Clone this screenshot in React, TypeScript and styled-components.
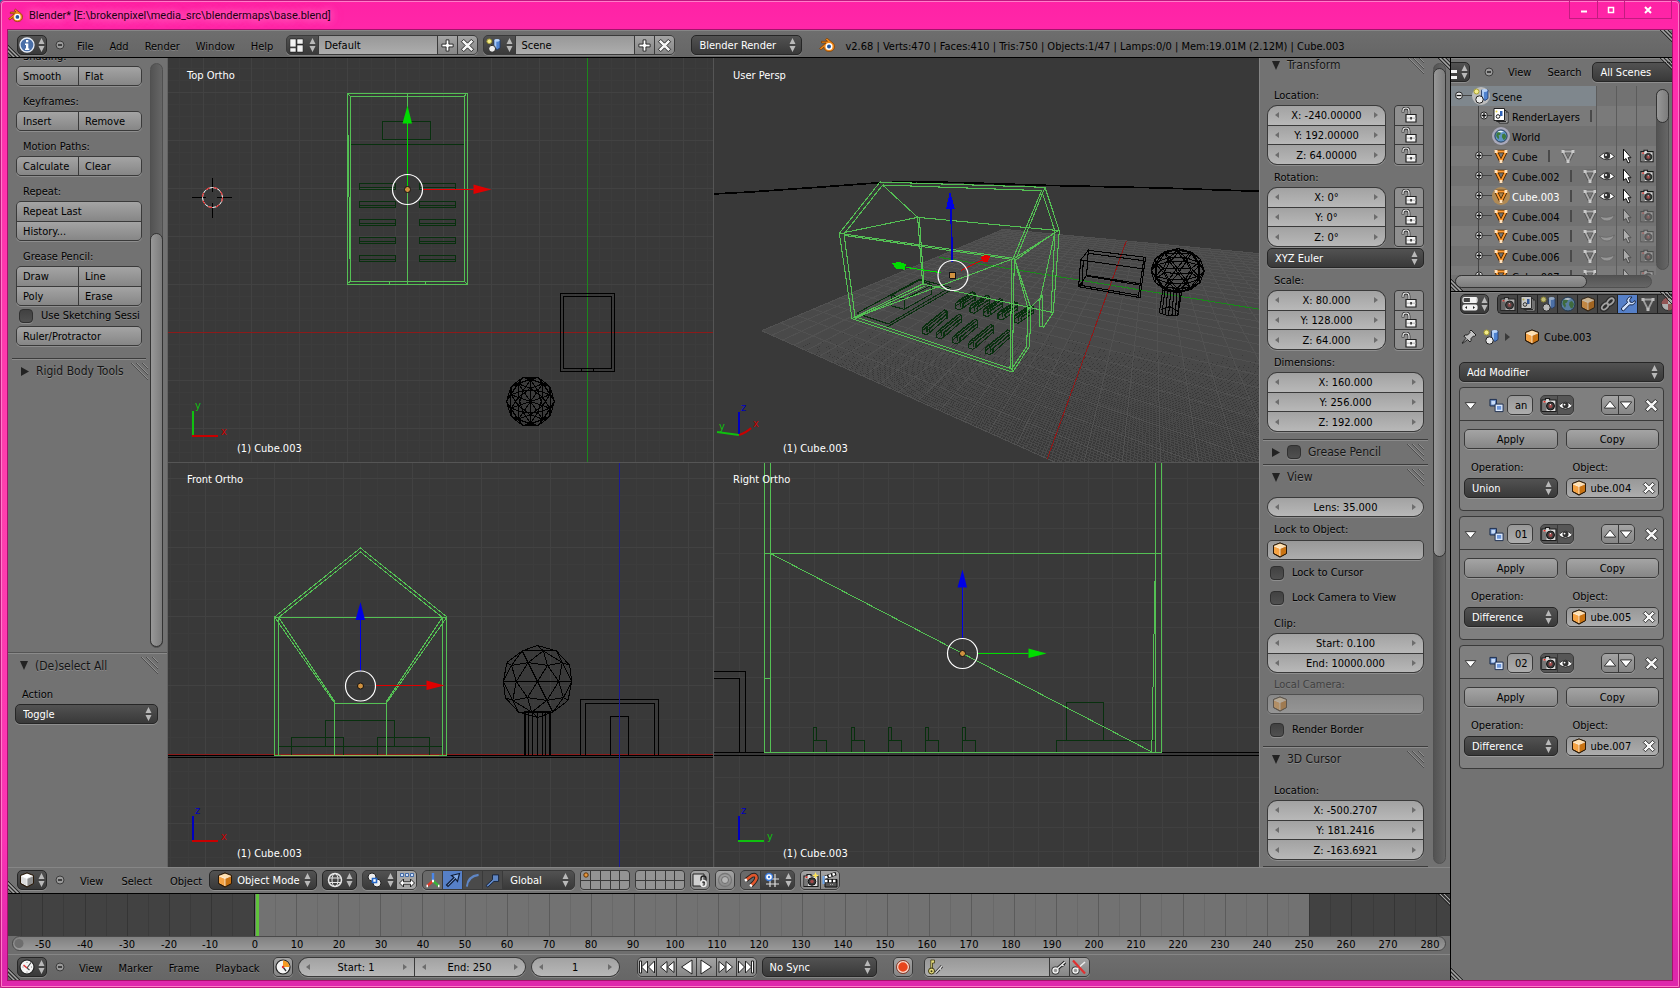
import React from "react";
import styled, { createGlobalStyle, css } from "styled-components";

const Global = createGlobalStyle`
  *, *::before, *::after { box-sizing: border-box; }
  body { margin: 0; background: #1c6aa0; }
  body, button, input, select {
    font: 11px/14px "DejaVu Sans Condensed", "DejaVu Sans", sans-serif;
    color: #000;
  }
  button, input, select { margin: 0; padding: 0; border: 0; background: none; border-radius: 0; outline: 0; }
  select { appearance: none; }
  ul { list-style: none; margin: 0; padding: 0; }
  svg { display: block; flex: none; }
`;

/* ---------- colours ---------- */
const line = "#3a3a3a";
const toolFill = "linear-gradient(#a4a4a4, #868686)";
const numFill = "linear-gradient(#a2a2a2, #b8b8b8)";
const textFill = "linear-gradient(#989898, #adadad)";
const menuFill = "linear-gradient(#525252, #393939)";
const lowShine = "0 1px 0 rgba(255,255,255,.2)";

/* ---------- icons ---------- */
const cube = (a: string, b: string, c: string) => (
  <g stroke="#2a1a0a" strokeWidth="1" strokeLinejoin="round">
    <path d="M8 1 14.500 3.500v8L8 15 1.500 11.500v-8z" fill={b} />
    <path d="M8 1 14.500 3.500 8 6.500 1.500 3.500z" fill={a} stroke="none" />
    <path d="M8 6.500V15l6.500-3.500v-8z" fill={c} stroke="none" />
    <path d="M2 4 8 6.500 14 4M8 6.500v7.500" fill="none" stroke="#fff" strokeOpacity=".7" />
    <path d="M8 1 14.500 3.500v8L8 15 1.500 11.500v-8z" fill="none" />
  </g>
);
const mesh = (c: string, dot: string, edge: string) => (
  <g>
    <path d="M3 3.500h10L8 13.500z" fill="none" stroke={edge} strokeWidth="3.500" strokeLinejoin="round" />
    <path d="M3 3.500h10L8 13.500z" fill="none" stroke={c} strokeWidth="1.800" />
    <path d="M1.500 2h3v3h-3zM11.500 2h3v3h-3zM6.500 12h3v3h-3z" fill={dot} />
  </g>
);
const icons: Record<string, React.ReactNode> = {
  logo: (
    <g>
      <path d="M.500 11.500 7 6H2.500V4.300H8.500L6.500 2.500 8 1.200l6 4.800c3 3 1.500 8.500-4 8.500-3 0-5-2-5-4.300l-3 2.500z" fill="#f08a1c" stroke="#7a3b00" strokeWidth=".7" />
      <circle cx="10" cy="9.500" r="3.500" fill="#fff" />
      <circle cx="10" cy="9.500" r="2" fill="#22569c" />
    </g>
  ),
  info: (
    <g>
      <circle cx="8" cy="8" r="7" fill="#4a6fa8" stroke="#e8eef8" strokeWidth="1.300" />
      <path d="M7 3h2.300v2.300H7zM6 6.500h3.300v5h1V13H6v-1.500h1V8H6z" fill="#fff" />
    </g>
  ),
  minus: (
    <g>
      <circle cx="8" cy="8" r="4" fill="#999" stroke="#3c3c3c" />
      <path d="M6 8h4" stroke="#222" strokeWidth="1.500" />
    </g>
  ),
  screens: (
    <g fill="#f2f2f2" stroke="#111" strokeWidth=".6">
      <path d="M1 1h6.500v8.500H1zM8.500 1H15v5.500H8.500zM1 10.500h6.500V15H1zM8.500 7.500H15V15H8.500z" />
    </g>
  ),
  plus: <path d="M6.500 2h3v4.500H14v3H9.500V14h-3V9.500H2v-3h4.500z" fill="#fff" stroke="#222" />,
  cross: <path d="M4 1.500 8 5.500l4-4L14.500 4l-4 4 4 4-2.500 2.500-4-4-4 4L1.500 12l4-4-4-4z" fill="#f6f6f6" stroke="#222" />,
  scene: (
    <g>
      <circle cx="3.500" cy="3.500" r="2.500" fill="#f4ec8c" stroke="#a89f30" />
      <path d="M8.500 2h6.500v8.500L12 12.500 8.500 10z" fill="#4f82cf" stroke="#1e3562" strokeWidth=".8" />
      <path d="M9 3h2v7.500L9 9.800z" fill="#a8c8f2" />
      <ellipse cx="11.700" cy="2.500" rx="3" ry="1.400" fill="#b9d4f8" />
      <circle cx="6.500" cy="11.500" r="3.700" fill="#ececec" stroke="#222" />
    </g>
  ),
  layers: (
    <g>
      <path d="M6 4h9v11H6z" fill="#ddd" stroke="#222" />
      <path d="M3.500 2.500h9.500v11H3.500z" fill="#eee" stroke="#222" />
      <path d="M1 .500h10.500v12H1z" fill="#fff" stroke="#222" />
      <path d="M7 3h2.500v5H7z" fill="#2e62b8" />
      <circle cx="5" cy="8.500" r="1.800" fill="#fff" stroke="#222" />
      <circle cx="3.500" cy="3.500" r="1" fill="#e8d84a" />
    </g>
  ),
  world: (
    <g>
      <circle cx="8" cy="8" r="7" fill="#5f93c4" stroke="#16304c" />
      <path d="M3 4.500 6 3l2 1-1 2.500-2 1 1 2-1 2.500L2.500 8zM9.500 6 12 5l2 3-1 3.500-2 1L9 9z" fill="#3d7a3a" />
      <path d="M4 3.500Q7 1 11 3L8 4z" fill="#e9f3fb" />
    </g>
  ),
  cube: cube("#ffe0b0", "#f5a344", "#c97312"),
  cubeGrey: cube("#fff", "#dcdcdc", "#8e8e8e"),
  mesh: mesh("#ff9c33", "#ffe2bd", "#4a2600"),
  meshGrey: mesh("#c4c4c4", "#eee", "#4a4a4a"),
  camera: (
    <g>
      <path d="M1 3h3.500V1.500h4V3H15v11.500H1z" fill="#ddd" stroke="#1b1b1b" strokeWidth="1.200" />
      <path d="M1.500 5.500h4v8.500h-4z" fill="#777" />
      <circle cx="9.500" cy="9" r="4" fill="#3b3b3b" stroke="#111" />
      <circle cx="9.500" cy="9" r="2" fill="#a04848" />
      <path d="M2.500 4h2v1.500h-2z" fill="#e02a20" />
      <path d="M8.500 7.500 10 7v1.500z" fill="#fff" />
    </g>
  ),
  eye: (
    <g>
      <path d="M.500 8.500Q8 .500 15.500 8.500 8 15 .500 8.500z" fill="#fff" stroke="#222" strokeWidth=".9" />
      <circle cx="8" cy="7.800" r="3.200" fill="#333" />
      <circle cx="7" cy="7" r="1" fill="#fff" />
    </g>
  ),
  eyeShut: <path d="M.500 8q7.500 3 15-1-2.500 6-7.500 6Q3 13 .500 8z" fill="#969696" stroke="#666" strokeWidth=".8" />,
  arrow: <path d="M4.500 1v11.500l2.500-2 2 4.500 2-1-2-4.300H12z" fill="#fff" stroke="#111" />,
  outliner: (
    <g fill="#f2f2f2">
      <path d="M2 1h4v3H2z" fill="#e8a33d" />
      <path d="M8 6h7v3H8zM8 12h7v3H8zM3 4h1.500v10H7v-1.500H4.500V8.300H7V7H3z" />
    </g>
  ),
  props: (
    <g stroke="#f2f2f2" strokeWidth="1.200">
      <rect x="1" y="1.500" width="14" height="5" rx="1.500" fill="#444" />
      <path d="M8.500 2H14v4H8.500z" fill="#f2f2f2" />
      <rect x="1" y="9" width="14" height="5" rx="1.500" fill="#f2f2f2" />
      <path d="m3 11.500 2-1.500v3zM13 11.500 11 10v3z" fill="#222" stroke="none" />
    </g>
  ),
  link: (
    <g fill="none">
      <g stroke="#222" strokeWidth="4.500"><ellipse cx="5" cy="10.500" rx="3.800" ry="2.300" transform="rotate(-45 5 10.500)" /><ellipse cx="10.500" cy="5.500" rx="3.800" ry="2.300" transform="rotate(-45 10.500 5.500)" /></g>
      <g stroke="#c8c8c8" strokeWidth="1.800"><ellipse cx="5" cy="10.500" rx="3.800" ry="2.300" transform="rotate(-45 5 10.500)" /><ellipse cx="10.500" cy="5.500" rx="3.800" ry="2.300" transform="rotate(-45 10.500 5.500)" /></g>
    </g>
  ),
  wrench: (
    <path d="M15 4.500 12.500 6.500 10 6 9.800 3.500 12 1Q9 .300 7.500 2.500T7.500 6.500L1.500 12Q1 14.500 3.500 15L9.500 8.800Q12.500 9.500 14.300 7.800T15 4.500z" fill="#cfe0fa" stroke="#15264a" />
  ),
  material: (
    <g>
      <circle cx="8" cy="8" r="6.500" fill="#dcdcdc" stroke="#222" />
      <path d="M8 1.500A6.500 6.500 0 0 0 1.500 8H8zM8 8h6.500A6.500 6.500 0 0 1 8 14.500z" fill="#b35a5a" />
    </g>
  ),
  pin: (
    <path d="M10 1 15 6 13.500 7.300 12.500 7 10 9.500Q10.500 12 9 13L6.500 10.500 1.500 14.500 1 14 5 9.300 2.800 7Q4 5.500 6.500 6L9 3.500 8.700 2.400z" fill="#c4c4c4" stroke="#222" />
  ),
  boolean: (
    <g>
      <path d="M1 1.500h7v7H1z" fill="#5c7fb8" stroke="#1c2c4c" />
      <path d="M2.500 3h4v4h-4z" fill="#c9dcf8" />
      <path d="M6.500 6.500h8.500v8H6.500z" fill="#dce9fd" stroke="#1c2c4c" />
      <path d="M8.500 8.500h4.500v4H8.500z" fill="#6b94d8" />
    </g>
  ),
  triDown: <path d="M1.500 4.500h13L8 12.500z" fill="#fff" stroke="#222" />,
  triUp: <path d="M1.500 11.500h13L8 3.500z" fill="#fff" stroke="#222" />,
  lock: (
    <g>
      <path d="M2 5.500V4q0-3 3-3t3 3v4" fill="none" stroke="#333" strokeWidth="2.800" />
      <path d="M2 5V4q0-3 3-3t3 3v4" fill="none" stroke="#eee" strokeWidth="1.200" />
      <path d="M5 7.500h10v7.500H5z" fill="#f4f4f4" stroke="#222" strokeWidth="1.200" />
      <path d="M6 10.500h8.500v1.500H6z" fill="#c8c8c8" />
      <path d="M9.300 10h1.500v2.500H9.300z" fill="#222" />
    </g>
  ),
  wire: (
    <g fill="none" stroke="#e6e6e6">
      <circle cx="8" cy="8" r="6.500" strokeWidth="1.500" />
      <ellipse cx="8" cy="8" rx="3" ry="6.500" />
      <path d="M2 6h12M2 10.500h12" />
    </g>
  ),
  pivot: (
    <g>
      <circle cx="6" cy="5" r="4" fill="#ececec" stroke="#222" />
      <circle cx="11" cy="11" r="4" fill="#ececec" stroke="#222" />
      <path d="M6.500 6.500h4v4h-4z" fill="#fff" stroke="#2568c8" strokeWidth="1.600" />
    </g>
  ),
  align: (
    <g>
      <path d="M1.500 1.500h3v3h-3zM6.500 1.500h3v3h-3zM11.500 1.500h3v3h-3z" fill="#cfe2ff" stroke="#24549c" strokeWidth=".8" />
      <path d="M.500 11l4-4v2.800h7V7l4 4-4 4v-2.800h-7V15z" fill="#fff" stroke="#222" />
    </g>
  ),
  axes: (
    <g strokeWidth="2.400">
      <path d="M8 9V1" stroke="#4a86e8" />
      <path d="m8 9-6 5" stroke="#e03a2a" />
      <path d="m8 9 6 5" stroke="#3ab53a" />
      <path d="M7 9h2M1.500 14h1.500M13 14h1.500" stroke="#fff" />
    </g>
  ),
  move: <path d="M1.500 13 9 5.500 6.500 3.500 14.500 1.500 12.500 9.500 10.500 7 3 14.500z" fill="#7fa8e6" stroke="#101d38" strokeWidth="1.200" />,
  rotate: <path d="M2 14.500Q3 3.500 14.500 2" fill="none" stroke="#5f86c4" strokeWidth="2.200" />,
  scale: <path d="M1 13.500 8 7V2h6.500v7H9.500L3 15z" fill="#5f86c4" stroke="#16233c" />,
  lockView: (
    <g>
      <path d="M1 2h11v12H1z" fill="#cfcfcf" stroke="#222" />
      <rect x="9" y="4" width="5" height="6" rx="2.500" fill="none" stroke="#222" strokeWidth="1.400" />
      <rect x="9" y="8.500" width="5" height="6" rx="2.500" fill="none" stroke="#eee" strokeWidth="1.400" />
    </g>
  ),
  disc: (
    <g fill="none">
      <circle cx="8" cy="8" r="6.500" stroke="#777" strokeWidth="1.300" />
      <circle cx="8" cy="8" r="3.500" stroke="#6e6e6e" fill="#b4b4b4" />
    </g>
  ),
  magnet: (
    <g fill="none">
      <path d="M3 8 9 3.500Q13.500 2 13.500 6 13 9 8 13.500" stroke="#222" strokeWidth="4.500" />
      <path d="M3 8 9 3.500Q13.500 2 13.500 6 13 9 8 13.500" stroke="#e0562c" strokeWidth="2.600" />
      <path d="m2 8.700 1.800-1.300M7.200 14.200l1.500-1.400" stroke="#fff" strokeWidth="2.600" />
    </g>
  ),
  snap: (
    <g>
      <path d="M6 2v13M11 2v13M2 7h13M2 12h13" stroke="#ddd" strokeWidth="1.200" />
      <circle cx="5" cy="5" r="3.500" fill="#fff" stroke="#3a78d8" strokeWidth="1.400" />
      <circle cx="5" cy="5" r="1.200" fill="#3a78d8" />
    </g>
  ),
  cameraStar: (
    <g>
      <path d="M1 4h3V2.500h4V4h7v10.500H1z" fill="#ddd" stroke="#1b1b1b" strokeWidth="1.200" />
      <path d="M1.500 6.500h3.500v7.500H1.500z" fill="#777" />
      <circle cx="9" cy="9.500" r="3.800" fill="#3b3b3b" stroke="#111" />
      <circle cx="9" cy="9.500" r="1.800" fill="#a04848" />
      <path d="M2.500 4.500h2V6h-2z" fill="#e02a20" />
      <path d="M12.500 0l1 2.500 2.500 1-2.500 1-1 2.500-1-2.500-2.500-1 2.500-1z" fill="#ffe65a" />
    </g>
  ),
  clap: (
    <g>
      <path d="M3 7.500h12v7.500H3z" fill="#555" stroke="#111" />
      <path d="M3 9h12M3 5.500 14 1.500" stroke="#111" strokeWidth="3.500" />
      <path d="M3 9h12M3 5.500 14 1.500" stroke="#fff" strokeWidth="2.500" strokeDasharray="2.500 1.500" />
      <path d="M1.500 4v8" stroke="#6aa5ee" strokeWidth="2" />
      <path d="M8 12.500h3" stroke="#aaa" strokeDasharray="1 1" />
    </g>
  ),
  clock: (
    <g>
      <circle cx="8" cy="8" r="7" fill="#f5f5f5" stroke="#222" strokeWidth="1.200" />
      <path d="M8 9 12 3.500M8 9l2.500 2" stroke="#444" strokeWidth="1.200" />
      <path d="M8 9 4.500 6" stroke="#d33" strokeWidth="1.500" />
      <path d="M3.500 8h1M8 3v1M8 12.500v1M12 8h1" stroke="#888" />
    </g>
  ),
  clockRange: (
    <g>
      <circle cx="8" cy="8" r="7" fill="#f5f5f5" stroke="#222" strokeWidth="1.200" />
      <path d="M8 8V1.500A6.500 6.500 0 0 1 14.500 8z" fill="#f59a23" />
      <path d="m8 8 3 4" stroke="#333" strokeWidth="1.300" />
      <circle cx="8" cy="8" r="1.200" fill="#d33" />
    </g>
  ),
  first: <path d="M.500 2h2v12h-2zM8.500 2v12L2.500 8zM15.500 2v12l-6-6z" fill="#fff" stroke="#222" />,
  prev: <path d="M8 2.500v11L1.500 8zM15 2.500v11L8.500 8z" fill="#fff" stroke="#222" />,
  back: <path d="M13 1v14L2.500 8z" fill="#fff" stroke="#222" />,
  play: <path d="M3 1v14l10.500-7z" fill="#fff" stroke="#222" />,
  next: <path d="M8 2.500v11L14.500 8zM1 2.500v11L7.500 8z" fill="#fff" stroke="#222" />,
  last: <path d="M15.500 2h-2v12h2zM7.500 2v12l6-6zM.500 2v12l6-6z" fill="#fff" stroke="#222" />,
  record: (
    <g>
      <circle cx="8" cy="8" r="5.500" fill="#e8441c" stroke="#fbd9cc" strokeWidth="1.500" />
      <circle cx="8" cy="8" r="6.500" fill="none" stroke="#7a1a06" strokeWidth=".8" />
    </g>
  ),
  keyset: (
    <g>
      <circle cx="4.500" cy="12" r="3" fill="#e7dd7e" stroke="#3c3810" />
      <circle cx="4.500" cy="12.300" r="1" fill="#3c3810" />
      <path d="M3.800 9V1H7.500v3H5.500v5z" fill="#e7dd7e" stroke="#3c3810" strokeWidth=".8" />
      <path d="M8.500 14 15 7M12.500 9l1.500 1.500" stroke="#333" strokeWidth="3" />
      <path d="M8.500 14 15 7M12.500 9l1.500 1.500" stroke="#ddd" strokeWidth="1.300" />
    </g>
  ),
  key: (
    <g>
      <path d="M5 11 14 3M11 5l2 2" stroke="#222" strokeWidth="3.500" />
      <circle cx="4.500" cy="11.500" r="2.500" fill="#aaa" stroke="#222" strokeWidth="3" />
      <circle cx="4.500" cy="11.500" r="2.500" fill="#999" stroke="#eee" strokeWidth="1.500" />
      <path d="m6 10 8-7M11 5.500l1.500 1.500" stroke="#eee" strokeWidth="1.500" />
    </g>
  ),
  keyOff: (
    <g>
      <circle cx="4.500" cy="11.500" r="2.500" fill="#999" stroke="#222" strokeWidth="3" />
      <circle cx="4.500" cy="11.500" r="2.500" fill="#999" stroke="#eee" strokeWidth="1.500" />
      <path d="m6 10 8-7" stroke="#eee" strokeWidth="1.500" />
      <path d="m2 1.500 12 13" stroke="#e03030" strokeWidth="2.200" />
    </g>
  ),
};

const Icon = ({ name, size = 16, faded, soft }: { name: string; size?: number; faded?: boolean; soft?: boolean }) => (
  <svg width={size} height={size} viewBox="0 0 16 16" opacity={faded ? 0.4 : soft ? 0.7 : 1} aria-hidden="true">
    {icons[name]}
  </svg>
);

const UpDown = () => (
  <svg width="7" height="14" viewBox="0 0 7 14" fill="#b9b9b9" aria-hidden="true">
    <path d="M3.500 0 6.500 6h-6zM3.500 14 6.500 8h-6z" />
  </svg>
);

const HatchSvg = styled.svg<{ $place: "tr" | "bl" }>`
  position: absolute;
  z-index: 2;
  ${(p) => (p.$place === "tr" ? "top: 0; right: 0;" : "bottom: 0; left: 0;")}
`;
const Hatch = ({ place }: { place: "tr" | "bl" }) => (
  <HatchSvg $place={place} width="12" height="12" aria-hidden="true">
    {place === "tr" ? (
      <g>
        <path d="M0 0 12 12M4 0l8 8M8 0l4 4" stroke="#2a2a2a" />
        <path d="M2 0l10 10M6 0l6 6" stroke="#a5a5a5" />
      </g>
    ) : (
      <g>
        <path d="M0 0 12 12M0 4l8 8M0 8l4 4" stroke="#2a2a2a" />
        <path d="M0 2l10 10M0 6l6 6" stroke="#a5a5a5" />
      </g>
    )}
  </HatchSvg>
);

/* ---------- controls ---------- */
const Group = styled.div<{ $cols?: string; $rows?: number; $r?: number; $w?: string; $mt?: number; $faded?: boolean }>`
  display: grid;
  flex: none;
  grid-template-columns: ${(p) => p.$cols ?? "1fr"};
  grid-auto-rows: 1fr;
  gap: 1px;
  height: ${(p) => (p.$rows ?? 1) * 20}px;
  width: ${(p) => p.$w ?? "auto"};
  margin-top: ${(p) => p.$mt ?? 0}px;
  border: 1px solid ${line};
  border-radius: ${(p) => p.$r ?? 5}px;
  background: ${line};
  overflow: hidden;
  box-shadow: ${lowShine};
  opacity: ${(p) => (p.$faded ? 0.6 : 1)};
`;
const ToolBtn = styled.button<{ $align?: string; $fill?: string }>`
  display: flex;
  align-items: center;
  justify-content: ${(p) => p.$align ?? "flex-start"};
  padding: 2px ${(p) => (p.$align ? 0 : 6)}px 0;
  background: ${(p) => p.$fill ?? toolFill};
  min-width: 0;
  white-space: nowrap;
`;
const CellBtn = styled.button<{ $fill?: string }>`
  display: flex;
  align-items: center;
  justify-content: center;
  min-width: 0;
  background: ${(p) => p.$fill ?? toolFill};
`;
const NumBox = styled.div`
  display: flex;
  align-items: center;
  padding: 0 7px;
  min-width: 0;
  background: ${numFill};
  &::before, &::after {
    content: "";
    border: 3px solid transparent;
    border-width: 3px 4px;
    flex: none;
  }
  &::before { border-right-color: #6d6d6d; border-left-width: 0; }
  &::after { border-left-color: #6d6d6d; border-right-width: 0; }
  input { flex: 1; min-width: 0; width: 20px; text-align: center; padding-top: 2px; }
`;
const Num = ({ value, label }: { value: string; label: string }) => (
  <NumBox>
    <input aria-label={label} defaultValue={value} />
  </NumBox>
);
const MenuBox = styled.label<{ $w?: string; $mt?: number; $bare?: boolean }>`
  display: flex;
  align-items: center;
  flex: none;
  gap: 4px;
  height: ${(p) => (p.$bare ? "auto" : "20px")};
  width: ${(p) => p.$w ?? "auto"};
  margin-top: ${(p) => p.$mt ?? 0}px;
  padding: 0 5px 0 7px;
  border: ${(p) => (p.$bare ? "0" : "1px solid #262626")};
  border-radius: ${(p) => (p.$bare ? 0 : 5)}px;
  background: ${menuFill};
  box-shadow: ${(p) => (p.$bare ? "none" : lowShine)};
  select { flex: 1; min-width: 0; width: 20px; color: #fff; padding-top: 2px; }
`;
const Menu = ({ value, label, icon, ...rest }: { value: string; label: string; icon?: string; $w?: string; $mt?: number; $bare?: boolean }) => (
  <MenuBox {...rest}>
    {icon && <Icon name={icon} />}
    <select aria-label={label} defaultValue={value}>
      <option>{value}</option>
    </select>
    <UpDown />
  </MenuBox>
);
const EditorBtn = styled.button<{ $w?: number }>`
  display: flex;
  flex: none;
  align-items: center;
  justify-content: center;
  gap: 3px;
  width: ${(p) => p.$w ?? 30}px;
  height: 20px;
  border: 1px solid #262626;
  border-radius: 5px;
  background: ${menuFill};
  box-shadow: ${lowShine};
`;
const Editor = ({ icon, label, w }: { icon: string; label: string; w?: number }) => (
  <EditorBtn aria-label={label} $w={w}>
    <Icon name={icon} />
    <UpDown />
  </EditorBtn>
);
const MenuRow = styled.nav<{ $gap: number; $end: number; $lead: number }>`
  display: flex;
  flex: none;
  align-items: center;
  padding-right: ${(p) => p.$end}px;
  button { padding: 3px 0 0; margin-right: ${(p) => p.$gap}px; text-shadow: 0 1px 0 rgba(255, 255, 255, 0.2); }
  button:first-child { padding: 0; margin-right: ${(p) => p.$lead}px; }
  button:last-child { margin-right: 0; }
`;
const Menus = ({ items, gap = 16, end = 8, lead = 11 }: { items: string[]; gap?: number; end?: number; lead?: number }) => (
  <MenuRow $gap={gap} $end={end} $lead={lead}>
    <button aria-label="Collapse menus"><Icon name="minus" /></button>
    {items.map((m) => <button key={m}>{m}</button>)}
  </MenuRow>
);
const TextCell = styled.div<{ $pad?: number }>`
  display: flex;
  align-items: center;
  gap: 4px;
  min-width: 0;
  padding: 0 2px 0 ${(p) => p.$pad ?? 4}px;
  background: ${textFill};
  input { flex: 1; min-width: 0; width: 20px; padding-top: 2px; }
`;
const Label = styled.div<{ $faded?: boolean; $mt?: number; $pl?: number }>`
  height: 20px;
  flex: none;
  margin-top: ${(p) => p.$mt ?? 0}px;
  padding-left: ${(p) => p.$pl ?? 7}px;
  line-height: 22px;
  opacity: ${(p) => (p.$faded ? 0.45 : 1)};
  text-shadow: 0 1px 0 rgba(255, 255, 255, 0.2);
`;
const CheckLabel = styled.label<{ $mt?: number }>`
  display: flex;
  align-items: center;
  flex: none;
  height: 20px;
  gap: 8px;
  margin-top: ${(p) => p.$mt ?? 0}px;
  padding-left: 3px;
  white-space: nowrap;
  overflow: hidden;
  line-height: 16px;
  text-shadow: 0 1px 0 rgba(255, 255, 255, 0.15);
`;
const Tick = styled.input.attrs({ type: "checkbox" })`
  appearance: none;
  flex: none;
  width: 14px;
  height: 14px;
  border: 1px solid #303030;
  border-radius: 4px;
  background: linear-gradient(#414141, #505050);
  box-shadow: ${lowShine};
`;
const PanelHead = styled.div<{ $line?: boolean; $h?: number; $mt?: number }>`
  display: flex;
  align-items: center;
  flex: none;
  gap: 7px;
  height: ${(p) => p.$h ?? 25}px;
  margin: ${(p) => p.$mt ?? 0}px -4px 0;
  padding: 0 4px 0 9px;
  font-size: 12px;
  color: #141414;
  text-shadow: 0 1px 0 rgba(255, 255, 255, 0.2);
  ${(p) => p.$line && css`border-top: 1px solid #3c3c3c; box-shadow: inset 0 1px 0 #8c8c8c;`}
  span { flex: 1; white-space: nowrap; }
`;
const PanelTitle = ({ text, open, check, ...rest }: { text: string; open?: boolean; check?: boolean; $line?: boolean; $h?: number; $mt?: number }) => (
  <PanelHead {...rest}>
    <svg width="8" height="9" fill="#222" aria-hidden="true"><path d={open ? "M0 0h8L4 9z" : "M0 0v9l8-4.500z"} /></svg>
    {check && <Tick aria-label={text} />}
    <span>{text}</span>
    <svg width="17" height="17" fill="none" aria-hidden="true">
      <path d="M0 0l17 17M5 0l12 12M11 0l6 6" stroke="#4d4d4d" />
      <path d="M1 0l16 16M6 0l11 11M12 0l5 5" stroke="#909090" />
    </svg>
  </PanelHead>
);
const Track = styled.div<{ $dir: "v" | "h" }>`
  display: flex;
  flex: none;
  flex-direction: ${(p) => (p.$dir === "v" ? "column" : "row")};
  ${(p) => (p.$dir === "v" ? "width: 13px;" : "height: 13px;")}
  border-radius: 7px;
  border: 1px solid #505050;
  background: ${(p) => (p.$dir === "v" ? "linear-gradient(90deg, #535353, #666)" : "linear-gradient(#535353, #666)")};
`;
const Thumb = styled.div<{ $dir: "v" | "h"; $before: number; $size: string }>`
  flex: none;
  border-radius: 7px;
  border: 1px solid #333;
  ${(p) => p.$dir === "v"
    ? css`margin: ${p.$before}px -1px -1px; height: ${p.$size}; background: linear-gradient(90deg, #989898, #7c7c7c);`
    : css`margin: -1px 0 -1px ${p.$before}px; width: ${p.$size}; background: linear-gradient(#989898, #7c7c7c);`}
`;
const Bar = styled.header<{ $bg?: string; $h?: number; $pad?: number; $top?: number }>`
  position: relative;
  display: flex;
  flex: none;
  align-items: center;
  gap: 5px;
  height: ${(p) => p.$h ?? 26}px;
  padding-left: ${(p) => p.$pad ?? 9}px;
  padding-top: ${(p) => p.$top ?? 0}px;
  background: ${(p) => p.$bg ?? "#727272"};
  box-shadow: inset 0 1px 0 #868686;
  overflow: hidden;
  white-space: nowrap;
`;

/* ---------- window frame ---------- */
const Frame = styled.div`
  display: flex;
  flex-direction: column;
  height: 100vh;
  min-height: 900px;
  padding: 0 8px 8px;
  border-radius: 5px 5px 2px 2px;
  background: linear-gradient(#ff22a5, #ff2fae 8%, #ff3fae 50%, #fb33b4 85%, #df27ac 97%);
  box-shadow: inset 0 0 0 1px #c01880, inset 0 0 0 2px #ff7cc8;
`;
const TitleBar = styled.div`
  display: flex;
  flex: none;
  align-items: flex-start;
  height: 30px;
`;
const Title = styled.h1`
  flex: 1;
  display: flex;
  align-items: center;
  gap: 6px;
  margin: 0;
  height: 30px;
  font: 11px/16px Roboto, "Open Sans", sans-serif;
  color: #1a0010;
  span { padding-top: 1px; text-shadow: 0 0 8px rgba(255, 190, 230, 0.8), 0 0 12px rgba(255, 190, 230, 0.5); }
`;
const WinBtns = styled.div`
  display: flex;
  margin-top: 1px;
  border: 1px solid #c21c80;
  border-top: 0;
  button { width: 27px; height: 17px; display: grid; place-items: center; border-left: 1px solid #c21c80; }
  button:first-child { border-left: 0; }
  button:last-child { width: 47px; }
`;
const Body = styled.div`
  flex: 1;
  min-height: 0;
  display: flex;
  flex-direction: column;
  outline: 1px solid #a4126c;
  background: #727272;
`;
const Columns = styled.div`
  flex: 1;
  min-height: 0;
  display: grid;
  grid-template-columns: minmax(0, 1fr) 222px;
  border-top: 1px solid #000;
`;
const LeftCol = styled.div`
  display: flex;
  flex-direction: column;
  min-height: 0;
  min-width: 0;
`;
const View3D = styled.section`
  flex: 1;
  min-height: 0;
  display: grid;
  grid-template-columns: 160px minmax(0, 1fr) 191px;
`;

/* ---------- tool shelf ---------- */
const Shelf = styled.aside`
  display: flex;
  flex-direction: column;
  min-height: 0;
  background: #727272;
  border-right: 1px solid #636363;
`;
const ShelfTop = styled.div`
  flex: 1;
  min-height: 0;
  display: flex;
  overflow: hidden;
  padding: 0 4px 4px 8px;
  gap: 8px;
`;
const ShelfCol = styled.div`
  width: 126px;
  display: flex;
  flex-direction: column;
  margin-top: -12px;
`;
const ShelfScroll = styled.div`
  display: flex;
  padding-top: 5px;
`;
const Operator = styled.div`
  flex: none;
  height: 215px;
  padding: 0 9px 0 7px;
  border-top: 1px solid #555;
  box-shadow: inset 0 1px 0 #8a8a8a;
`;

/* ---------- viewports ---------- */
const Quad = styled.div`
  display: grid;
  grid-template: 1fr 1fr / 1fr 1fr;
  gap: 1px;
  background: #555;
  overflow: hidden;
`;
const Port = styled.svg`
  width: 100%;
  height: 100%;
  min-width: 0;
  min-height: 0;
  background: #393939;
  overflow: hidden;
  text { font-family: "DejaVu Sans Condensed", "DejaVu Sans", sans-serif; font-size: 11px; fill: #fff; }
`;
const GREEN = "#54c054";
const DARK = "#08300e";

const gridPath = (x0: number, y0: number, x1: number, y1: number, ox: number, oy: number, s: number) => {
  let d = "";
  for (let x = ox - Math.ceil((ox - x0) / s) * s; x < x1; x += s) if (x > x0) d += `M${Math.floor(x) + 0.5} ${y0}V${y1}`;
  for (let y = oy - Math.ceil((oy - y0) / s) * s; y < y1; y += s) if (y > y0) d += `M${x0} ${Math.floor(y) + 0.5}H${x1}`;
  return d;
};

type V = [number, number, number];
const sphereEdges: [V, V][] = (() => {
  const h = 1 / Math.sqrt(5), r = 2 / Math.sqrt(5);
  const v: V[] = [[0, 0, 1]];
  for (let i = 0; i < 5; i++) v.push([r * Math.cos((i * 72 * Math.PI) / 180), r * Math.sin((i * 72 * Math.PI) / 180), h]);
  for (let i = 0; i < 5; i++) v.push([r * Math.cos(((i * 72 + 36) * Math.PI) / 180), r * Math.sin(((i * 72 + 36) * Math.PI) / 180), -h]);
  v.push([0, 0, -1]);
  const faces: number[][] = [];
  for (let i = 0; i < 5; i++) {
    const a = 1 + i, b = 1 + ((i + 1) % 5), c = 6 + i, d = 6 + ((i + 1) % 5);
    faces.push([0, a, b], [a, b, c], [b, c, d], [11, c, d]);
  }
  const mid = (a: V, b: V): V => {
    const m: V = [a[0] + b[0], a[1] + b[1], a[2] + b[2]];
    const l = Math.hypot(...m);
    return [m[0] / l, m[1] / l, m[2] / l];
  };
  const out: [V, V][] = [];
  faces.forEach(([i, j, k]) => {
    const a = v[i], b = v[j], c = v[k], ab = mid(a, b), bc = mid(b, c), ca = mid(c, a);
    out.push([a, ab], [ab, b], [b, bc], [bc, c], [c, ca], [ca, a], [ab, bc], [bc, ca], [ca, ab]);
  });
  return out;
})();
const sphere = (cx: number, cy: number, rx: number, ry: number, tilt: number, spin: number) => {
  const t = (tilt * Math.PI) / 180, s = (spin * Math.PI) / 180;
  const p = ([x, y, z]: V) => {
    const X = x * Math.cos(s) - y * Math.sin(s), Y = x * Math.sin(s) + y * Math.cos(s);
    return `${(cx + rx * X).toFixed(1)} ${(cy - ry * (z * Math.cos(t) + Y * Math.sin(t))).toFixed(1)}`;
  };
  return sphereEdges.map(([a, b]) => `M${p(a)}L${p(b)}`).join("");
};

/* perspective floor: plane coordinates (0..0.5, 0..1) mapped to the quad a-b-c-d */
const floor = (() => {
  const a = [761.7, 330.7], b = [1047.3, 458.7], c = [1126.3, 241], d = [1003.3, 229.3];
  const dx1 = b[0] - c[0], dx2 = d[0] - c[0], dx3 = a[0] - b[0] + c[0] - d[0];
  const dy1 = b[1] - c[1], dy2 = d[1] - c[1], dy3 = a[1] - b[1] + c[1] - d[1];
  const det = dx1 * dy2 - dx2 * dy1;
  const g = (dx3 * dy2 - dx2 * dy3) / det, h = (dx1 * dy3 - dx3 * dy1) / det;
  const A = b[0] - a[0] + g * b[0], B = d[0] - a[0] + h * d[0];
  const D = b[1] - a[1] + g * b[1], E = d[1] - a[1] + h * d[1];
  const p = (u: number, v: number) => {
    const s = u * 2, w = g * s + h * v + 1;
    return `${((A * s + B * v + a[0]) / w).toFixed(1)} ${((D * s + E * v + a[1]) / w).toFixed(1)}`;
  };
  const lines = (n: number) => {
    let out = "";
    for (let i = 0; i <= n; i++) {
      const k = i / n;
      out += `M${p(0, k)}L${p(0.9, k)}`;
      if (k <= 0.9) out += `M${p(k, 0)}L${p(k, 1)}`;
    }
    return out;
  };
  return { minor: lines(320), major: lines(32) };
})();

const Dot = ({ x, y }: { x: number; y: number }) => (
  <g>
    <circle cx={x} cy={y} r="15" fill="none" stroke="#fff" strokeWidth="1.200" />
    <circle cx={x} cy={y} r="3" fill="#d0913f" stroke="#111" />
  </g>
);
const UpArrow = ({ x, y, c }: { x: number; y: number; c: string }) => (
  <g>
    <path d={`M${x} ${y - (c === "#00dc00" ? 0 : 15)}V${y - 66}`} stroke={c} />
    <path d={`M${x - 5} ${y - 66}h9.500L${x} ${y - 84}z`} fill={c} />
  </g>
);
const RightArrow = ({ x, y, c }: { x: number; y: number; c: string }) => (
  <g>
    <path d={`M${x + 15} ${y}H${x + 66}`} stroke={c} />
    <path d={`M${x + 66} ${y - 5}v9.500L${x + 84} ${y}z`} fill={c} />
  </g>
);
const Mini = ({ x, y, up, side, upC, sideC }: { x: number; y: number; up: string; side: string; upC: string; sideC: string }) => (
  <g>
    <path d={`M${x} ${y}V${y - 25}`} stroke={upC} strokeWidth="2" />
    <path d={`M${x - 1} ${y}H${x + 25}`} stroke={sideC} strokeWidth="2" />
    <text x={x + 2} y={y - 27} style={{ fill: upC }}>{up}</text>
    <text x={x + 28} y={y - 1} style={{ fill: sideC }}>{side}</text>
  </g>
);

const TopView = () => (
  <Port role="img" aria-label="Top view">
    <g transform="translate(-168 -58)">
      <g shapeRendering="crispEdges" fill="none">
        <path d={gridPath(168, 58, 713, 462, 587.5, 332, 12)} stroke="#3c3c3c" />
        <path d={gridPath(168, 58, 713, 462, 587.5, 332, 48)} stroke="#424242" />
        <path d="M168 332.500H713" stroke="#8c1a1a" />
        <path d="M587.500 58V462" stroke="#1c861c" />
        <path d="M560.500 293.500h54v78h-54zM563.500 296.500h48v72h-48zM581.500 368v3M593.500 368v3" stroke="#000" />
        <path d="M382.500 121.500h48v18h-48zM350 144.500h114" stroke={DARK} />
        {[183, 201, 219, 237, 255].map((y) => (
          <path key={y} d={`M359.500 ${y + 0.5}h36v6h-36zM359 ${y + 4.5}h36M419.500 ${y + 0.5}h36v6h-36zM419 ${y + 4.5}h36`} stroke={DARK} />
        ))}
        <path d="M347.500 93.500h120v191h-120zM350.500 96.500h114v185h-114zM407.500 93v191M348.500 135v62M349.500 197v62M389.500 281v3M425.500 281v3M347 93l4 4M467 93l-3 4M347 284l4-3M467 284l-3-3" stroke={GREEN} />
        <path d={sphere(530.5, 401.5, 24, 25.5, 90, 90)} stroke="#000" />
        <path d="M192 197.500h14M217 197.500h15M212.500 178v14M212.500 203v15" stroke="#000" />
      </g>
      <circle cx="212.500" cy="197.500" r="10" fill="none" stroke="#fff" />
      <circle cx="212.500" cy="197.500" r="10" fill="none" stroke="#f01010" strokeDasharray="4 4" />
      <UpArrow x={407.5} y={189.5} c="#00dc00" />
      <RightArrow x={407.5} y={189.5} c="#e00000" />
      <Dot x={407.5} y={189.5} />
      <Mini x={193} y={436} up="y" side="x" upC="#0fc00f" sideC="#c80000" />
      <text x="187" y="79">Top Ortho</text>
      <text x="237" y="452">(1) Cube.003</text>
    </g>
  </Port>
);

const FrontView = () => (
  <Port role="img" aria-label="Front view">
    <g transform="translate(-168 -463)">
      <g shapeRendering="crispEdges" fill="none">
        <path d={gridPath(168, 463, 713, 867, 619.4, 754.4, 17.25)} stroke="#3c3c3c" />
        <path d={gridPath(168, 463, 713, 867, 619.4, 754.4, 69)} stroke="#424242" />
        <path d="M168 754.500H713" stroke="#8c1a1a" />
        <path d="M168 757.500H713M168 755.500H713" stroke="#000" />
        <path d="M325.500 746v-25.500h69V746M278 746.500h165M291.500 755v-17.500h52V755M377.500 755v-17.500h52V755" stroke={DARK} />
        <path d="M580.500 755v-55.500h78V755M585.500 755v-51.500h69V755M610.500 755v-38.500h18V755" stroke="#000" />
        <path d={sphere(537.5, 681.5, 36, 36, 0, 0)} stroke="#000" />
        <path d="M524.500 755v-43.500h26V755M525.500 712v43M528.500 712v43M532.500 712v43M537.500 712v43M542.500 712v43M545.500 712v43M549.500 712v43" stroke="#000" />
        <path d="M274.500 755.500V617.500h172v138zM278.500 617v138M442.500 617v138M274.500 617 360.500 548 447 617M278.500 617.500 360.500 552 442.500 617.500M274.500 617 334.500 703M279 618 335 702M447 617 386.500 703M442 618 386 702M334.500 755v-51.500h52V755" stroke={GREEN} />
        <path d="M619.500 463V867" stroke="#1b1b96" />
        <path d="M281 755.500h158" stroke="#8fb858" />
      </g>
      <UpArrow x={360.5} y={686} c="#0000e6" />
      <RightArrow x={360.5} y={685.5} c="#e00000" />
      <Dot x={360.5} y={686} />
      <Mini x={193} y={841} up="z" side="x" upC="#0000c0" sideC="#c80000" />
      <text x="187" y="483">Front Ortho</text>
      <text x="237" y="857">(1) Cube.003</text>
    </g>
  </Port>
);

const RightView = () => (
  <Port role="img" aria-label="Right view">
    <g transform="translate(-714 -463)">
      <g shapeRendering="crispEdges" fill="none">
        <path d={gridPath(714, 463, 1259, 867, 739.4, 503.4, 24.9)} stroke="#404040" />
        <path d="M714 671.500h31.500V752M714 678.500h25.500V752M714 752.500h50M1162 752.500h97M714 755.500H1259" stroke="#000" />
        {[813.5, 851.5, 888.5, 925.5, 962.5].map((x) => (
          <path key={x} d={`M${x} 752v-24.500h3V740.500h10V752M${x} 740.500h3`} stroke={DARK} />
        ))}
        <path d="M1066.500 740v-37.500h37V740M1056.500 752v-11.500H1155" stroke={DARK} />
        <path d="M764.500 463v289.500H1161.500V463M770.500 463v289M1155.500 463v289M764 553.500h398M764 678.500h6M770.500 553.500 1152 752M1154.500 581v53M1153.500 634v53M1152.500 687v53M1151.500 740v12" stroke={GREEN} />
      </g>
      <UpArrow x={962.5} y={653.5} c="#0000e6" />
      <RightArrow x={962.5} y={653.5} c="#00dc00" />
      <Dot x={962.5} y={653.5} />
      <Mini x={739} y={841} up="z" side="y" upC="#0000c0" sideC="#0fc00f" />
      <text x="733" y="483">Right Ortho</text>
      <text x="783" y="857">(1) Cube.003</text>
    </g>
  </Port>
);

/* one pew: a low seat box with a thin back, drawn along (l, -h) */
const bench = (x: number, y: number, l: number, h: number) =>
  `M${x - 12} ${y}v16l12 4 10-6v-14M${x - 12} ${y}l8-8 6 4v16M${x - 12} ${y}l${l}-${h}M${x - 4} ${y - 8}l${l}-${h}l8 3v24M${x + 2} ${y - 4}l${l}-${h}M${x} ${y + 20}l10-6 ${l - 6}-${h}M${x + 10} ${y}l${l - 6}-${h - 6}M${x - 12} ${y + 8}l${l}-${h}M${x + 6} ${y + 6}l${l - 6}-${h}`;

const PerspView = () => (
  <Port role="img" aria-label="Perspective view">
    <g transform="translate(-714 -58)">
      <g shapeRendering="crispEdges" fill="none">
        <path d={floor.minor} stroke="#494949" />
        <path d={floor.major} stroke="#515151" />
      </g>
      <g transform="translate(750 170) scale(.3333)" shapeRendering="crispEdges" fill="none">
        <g style={{ strokeWidth: 3.2 }}>
          <path d="M568 262 1530 418" stroke="#1c861c" />
          <path d="M1129 213 892 866" stroke="#8c1a1a" />
          <g stroke={DARK}>
            {[[629, 400], [672, 410], [712, 420], [756, 430], [804, 440]].map(([x, y]) => <path key={x} d={bench(x, y, 42, 26)} />)}
            {[[529, 474], [572, 487], [620, 502], [668, 518], [719, 534]].map(([x, y]) => <path key={x} d={bench(x, y, 58, 46)} />)}
            <path d="M425 375 510 330 545 345V372L463 418V388L425 375V408L463 418M463 388 545 345M320 430 508 328 600 352 415 462 320 430M410 472 600 362" />
          </g>
          <g stroke="#000">
            <path d="M-112 72 0 66 200 52 390 38 500 35 640 38 885 46 1240 54 1530 64" strokeWidth="5" />
            <path d="M1015 241 1187 262 1170 383 986 350 992 270 1015 241 1010 316 1175 342M992 270 1182 297M1015 250 1180 272M1010 316 986 350M1000 272 996 345M1182 265 1165 380M986 345 1166 376M1010 318 1172 346" />
            <path d={sphere(1283, 302, 80, 67, 25, 17)} />
            <path d="M1240 350 1228 428 1250 436 1283 437 1297 355M1246 352 1236 430M1254 354 1246 434M1263 356 1256 436M1272 356 1266 437M1281 357 1276 437M1290 356 1284 436M1240 362 1295 366M1232 418 1260 410 1284 424" />
          </g>
          <path
            d="M390 36 885 52 928 182 910 428 878 475M398 45 875 62 915 184 903 428M390 36 268 190 306 446 785 606M398 45 282 192 315 440 785 597M398 45 503 142 282 188M503 142 928 182M503 142 518 342M508 142 522 345M268 190 793 265M282 196 790 269M306 446 518 342 910 428M315 446 525 348M320 441 790 266M885 52 800 262M875 62 790 264M793 265 928 180M797 270 915 187M793 265 787 606M786 270 780 598M793 265 842 412 842 455 838 530 788 606M799 290 834 415 830 530 783 600M915 187 868 400V470H878V378L835 418"
            stroke={GREEN}
          />
          <path d="M607 275 603 118" stroke="#0000c8" strokeWidth="5" />
          <path d="M633 302 700 268" stroke="#e00000" />
          <path d="M572 308 468 292" stroke="#00dc00" />
        </g>
        <path d="M588 118h27L600 64z" fill="#0000e6" />
        <path d="M692 262 708 254 720 260 713 275H698z" fill="#e00000" />
        <path d="M425 280 448 276 468 282 464 299 440 297z" fill="#00dc00" />
        <path d="M600 307h18v18h-18z" fill="#d0913f" stroke="#111" strokeWidth="3" />
      </g>
      <circle cx="953" cy="275.500" r="15" fill="none" stroke="#fff" strokeWidth="1.200" />
      <path d="M739 436V412" stroke="#0000c0" strokeWidth="2" />
      <path d="M739 435 717 432" stroke="#0fc00f" strokeWidth="2" />
      <path d="M739 435Q746 433 751 428" stroke="#c80000" strokeWidth="2" fill="none" />
      <text x="741" y="411" style={{ fill: "#0000c0" }}>z</text>
      <text x="719" y="430" style={{ fill: "#0fc00f" }}>y</text>
      <text x="753" y="427" style={{ fill: "#c80000" }}>x</text>
      <text x="733" y="79">User Persp</text>
      <text x="783" y="452">(1) Cube.003</text>
    </g>
  </Port>
);

/* ---------- properties shelf of the 3D view ---------- */
const NShelf = styled.aside`
  position: relative;
  display: flex;
  gap: 9px;
  padding: 0 0 0 7px;
  overflow: hidden;
  background: #727272;
  border-left: 1px solid #868686;
`;
const NCol = styled.div`
  width: 157px;
  flex: none;
  display: flex;
  flex-direction: column;
  min-height: 0;
`;
const NScroll = styled.div`
  display: flex;
  padding: 5px 0 3px;
`;
const Pair = styled.div`
  display: grid;
  flex: none;
  grid-template-columns: 119px 30px;
  justify-content: space-between;
`;
const Vec = ({ values, name, locks, mt }: { values: string[]; name: string; locks?: boolean; mt?: number }) => {
  const fields = (
    <Group $rows={values.length} $r={10} $mt={mt}>
      {values.map((v) => <Num key={v} value={v} label={`${name} ${v[0]}`} />)}
    </Group>
  );
  if (!locks) return fields;
  return (
    <Pair>
      {fields}
      <Group $rows={values.length} $r={4}>
        {values.map((v) => <CellBtn key={v} $fill="#8f8f8f" aria-label={`Lock ${name} ${v[0]}`}><Icon name="lock" /></CellBtn>)}
      </Group>
    </Pair>
  );
};

const NPanel = () => (
  <NShelf>
    <NCol>
      <PanelTitle text="Transform" open $h={14} />
      <Label $mt={13}>Location:</Label>
      <Vec locks name="Location" values={["X: -240.00000", "Y: 192.00000", "Z: 64.00000"]} />
      <Label $mt={2}>Rotation:</Label>
      <Vec locks name="Rotation" values={["X: 0°", "Y: 0°", "Z: 0°"]} />
      <Menu value="XYZ Euler" label="Rotation mode" $mt={1} />
      <Label $mt={2}>Scale:</Label>
      <Vec locks name="Scale" values={["X: 80.000", "Y: 128.000", "Z: 64.000"]} />
      <Label $mt={2}>Dimensions:</Label>
      <Vec name="Dimensions" values={["X: 160.000", "Y: 256.000", "Z: 192.000"]} />
      <PanelTitle text="Grease Pencil" check $line $mt={7} />
      <PanelTitle text="View" open $line />
      <Vec name="Lens" values={["Lens: 35.000"]} mt={8} />
      <Label $mt={2}>Lock to Object:</Label>
      <Group $mt={1}><TextCell><Icon name="cube" /><input aria-label="Lock to object" /></TextCell></Group>
      <CheckLabel $mt={3}><Tick />Lock to Cursor</CheckLabel>
      <CheckLabel $mt={5}><Tick />Lock Camera to View</CheckLabel>
      <Label $mt={5}>Clip:</Label>
      <Vec name="Clip" values={["Start: 0.100", "End: 10000.000"]} />
      <Label $faded $mt={1}>Local Camera:</Label>
      <Group $faded><TextCell><Icon name="cube" soft /><input aria-label="Local camera" disabled /></TextCell></Group>
      <CheckLabel $mt={6}><Tick />Render Border</CheckLabel>
      <PanelTitle text="3D Cursor" open $line $mt={6} />
      <Label $mt={9}>Location:</Label>
      <Vec name="3D cursor" values={["X: -500.2707", "Y: 181.2416", "Z: -163.6921"]} />
      <PanelHead $line $mt={6} />
    </NCol>
    <NScroll>
      <Track $dir="v"><Thumb $dir="v" $before={4} $size="489px" /></Track>
    </NScroll>
    <Hatch place="tr" />
  </NShelf>
);

/* ---------- 3D header bits ---------- */
const LayerGrid = styled.div`
  display: grid;
  flex: none;
  grid-template: 1fr 1fr / repeat(5, 1fr);
  gap: 1px;
  width: 50px;
  height: 20px;
  border: 1px solid ${line};
  border-radius: 4px;
  background: ${line};
  overflow: hidden;
  box-shadow: ${lowShine};
  button { display: grid; place-items: center; background: #949494; }
`;
const Layers = ({ on, from }: { on?: boolean; from: number }) => (
  <LayerGrid>
    {Array.from({ length: 10 }, (_, i) => (
      <button key={i} aria-label={`Layer ${from + i}`}>
        {on && i === 0 && <svg width="6" height="6"><circle cx="3" cy="3" r="2.200" fill="#e8963a" stroke="#5a3208" /></svg>}
      </button>
    ))}
  </LayerGrid>
);
const DarkCell = styled.button`
  display: flex;
  align-items: center;
  justify-content: center;
  gap: 5px;
  min-width: 0;
  background: ${menuFill};
`;
const PLAY = ["first", "prev", "back", "play", "next", "last"];
const PLAY_LABELS = ["Jump to start", "Previous keyframe", "Play reversed", "Play", "Next keyframe", "Jump to end"];

/* ---------- timeline ---------- */
const TimeEditor = styled.section`
  position: relative;
  flex: none;
  display: flex;
  flex-direction: column;
  justify-content: space-between;
  height: 87px;
  border-top: 1px solid #000;
  background: #6e6e6e;
`;
const Strip = styled.svg`
  width: 100%;
  height: 42px;
  background: #727272;
`;
const Scale = styled.div`
  height: 15px;
  margin: 0 4px;
  border: 1px solid #4a4a4a;
  border-radius: 8px;
  background: linear-gradient(#808080, #9a9a9a);
  overflow: hidden;
  svg { width: 100%; height: 13px; }
  text { font-family: "DejaVu Sans Condensed", "DejaVu Sans", sans-serif; font-size: 11px; text-anchor: middle; }
`;
const fx = (f: number) => Math.round(245.5 + f * 4.223);
const labelX = (f: number) => Math.round(242.4 + f * 4.195) - (f < 0 ? 3 : 0);
const TimeArea = () => (
  <TimeEditor>
    <div>
      <Strip aria-label="Frames" role="img" shapeRendering="crispEdges">
        <rect width={fx(0)} height="42" fill="#424242" />
        <rect x={fx(250)} width="1000" height="42" fill="#424242" />
        {Array.from({ length: 68 }, (_, i) => -55 + i * 5).map((f) => {
          const out = f < 0 || f >= 250;
          const c = f % 10 ? (out ? "#3b3b3b" : "#696969") : out ? "#353535" : "#5b5b5b";
          return <path key={f} d={`M${fx(f) + 0.5} 0V42`} stroke={f === 0 ? "#1a1a1a" : c} />;
        })}
        <rect x={fx(0) + 2} width="3" height="42" fill="#5fc23c" />
      </Strip>
      <Scale>
        <svg>
          <circle cx="6" cy="6.500" r="4.500" fill="#6e6e6e" />
          {Array.from({ length: 34 }, (_, i) => -50 + i * 10).map((f) => (
            <text key={f} x={labelX(f)} y="11">{f}</text>
          ))}
        </svg>
      </Scale>
    </div>
    <Bar $h={26} $bg="linear-gradient(#6e6e6e, #666)" as="footer">
      <Hatch place="bl" />
      <Editor icon="clock" label="Timeline editor" />
      <Menus items={["View", "Marker", "Frame", "Playback"]} lead={11} end={8} />
      <Group $w="20px"><CellBtn aria-label="Use preview range"><Icon name="clockRange" /></CellBtn></Group>
      <Group $w="228px" $cols="1fr 110px" $r={10}>
        <Num value="Start: 1" label="Start frame" />
        <Num value="End: 250" label="End frame" />
      </Group>
      <Group $w="89px" $r={10}><Num value="1" label="Current frame" /></Group>
      <Spacer $w={7} />
      <Group $w="120px" $cols="repeat(6, 1fr)">
        {PLAY.map((p, i) => <CellBtn key={p} aria-label={PLAY_LABELS[i]}><Icon name={p} /></CellBtn>)}
      </Group>
      <Menu value="No Sync" label="Sync mode" $w="115px" />
      <Spacer $w={6} />
      <Group $w="20px"><CellBtn aria-label="Record"><Icon name="record" /></CellBtn></Group>
      <Spacer $w={1} />
      <Group $w="166px" $cols="1fr 19px 19px">
        <TextCell $pad={2}><Icon name="keyset" /><input aria-label="Keying set" /></TextCell>
        <CellBtn aria-label="Insert keyframes"><Icon name="key" /></CellBtn>
        <CellBtn aria-label="Delete keyframes"><Icon name="keyOff" /></CellBtn>
      </Group>
    </Bar>
    <Hatch place="tr" />
  </TimeEditor>
);
const Spacer = styled.span<{ $w: number }>`
  width: ${(p) => p.$w}px;
  flex: none;
`;

/* ---------- right column ---------- */
const RightCol = styled.div`
  display: flex;
  flex-direction: column;
  min-height: 0;
  min-width: 0;
  border-left: 1px solid #000;
  background: #727272;
`;
const OutBox = styled.section`
  position: relative;
  flex: none;
  height: 234px;
  display: flex;
  flex-direction: column;
  border-bottom: 1px solid #000;
  overflow: hidden;
`;
const OutMain = styled.div`
  display: flex;
  height: 190px;
  padding-top: 1px;
  overflow: hidden;
  ul { flex: 1; min-width: 0; overflow: hidden; }
`;
const OutScroll = styled.div`
  display: flex;
  padding: 3px 3px 5px 0;
`;
const Row = styled.li<{ $i: number }>`
  display: flex;
  height: 20px;
  background: ${(p) => (p.$i % 2 ? "#7a7a7a" : "#727272")};
`;
const NameCell = styled.div<{ $hot?: boolean; $white?: boolean }>`
  flex: 1;
  min-width: 0;
  display: flex;
  align-items: center;
  overflow: hidden;
  white-space: nowrap;
  background: ${(p) => (p.$hot ? "#7f878d" : "transparent")};
  color: ${(p) => (p.$white ? "#fff" : "#000")};
  span { padding: 3px 0 0 2px; }
`;
const Halo = styled.div<{ $c?: string }>`
  width: 18px;
  height: 18px;
  flex: none;
  display: grid;
  place-items: center;
  border-radius: 50%;
  background: ${(p) => p.$c ?? "transparent"};
`;
const Sep = styled.i`
  width: 2px;
  height: 12px;
  margin: 0 10px;
  background: #4a4a4a;
  flex: none;
`;
const Flag = styled.button`
  width: 20px;
  flex: none;
  display: flex;
  align-items: center;
  justify-content: center;
  border-left: 1px solid #5c5c5c;
`;
const Branch = ({ w, cx, open, stem }: { w: number; cx?: number; open?: boolean; stem?: boolean }) => (
  <svg width={w} height="20" aria-hidden="true" fill="none">
    {stem && <path d="M27.500 0v20" stroke="#444" />}
    {cx && <path d={`M${cx} 9.500H${w}`} stroke="#444" />}
    {cx && <circle cx={cx} cy="9.500" r="3.500" fill="#eee" stroke="#222" />}
    {cx && <path d={`M${cx - 2.5} 9.500h5${open ? "" : `M${cx} 7v5`}`} stroke="#111" strokeWidth="1.300" />}
  </svg>
);
const OutHead = styled.div`
  display: flex;
  align-items: center;
  gap: 5px;
  margin-left: -11px;
`;
const HScroll = styled.div`
  padding: 0 20px 0 4px;
`;
const OBJECTS = ["Cube", "Cube.002", "Cube.003", "Cube.004", "Cube.005", "Cube.006", "Cube.007"];
const Outliner = () => (
  <OutBox>
    <Bar $pad={0} $h={27}>
      <OutHead>
        <Editor icon="outliner" label="Outliner editor" />
        <Spacer $w={1} />
        <Menus items={["View", "Search"]} end={6} />
        <Menu value="All Scenes" label="Display mode" $w="110px" />
      </OutHead>
    </Bar>
    <OutMain>
      <ul>
        <Row $i={0}>
          <NameCell $hot><Branch w={21} cx={8} open /><Halo $c="#bcbcbc"><Icon name="scene" /></Halo><span>Scene</span></NameCell>
          <Flag tabIndex={-1} /><Flag tabIndex={-1} /><Flag tabIndex={-1} />
        </Row>
        <Row $i={1}>
          <NameCell><Branch w={41} cx={33} stem /><Halo><Icon name="layers" /></Halo><span>RenderLayers</span><Sep /></NameCell>
          <Flag tabIndex={-1} /><Flag tabIndex={-1} /><Flag tabIndex={-1} />
        </Row>
        <Row $i={2}>
          <NameCell><Branch w={41} stem /><Halo $c="#a9a9bb"><Icon name="world" size={14} /></Halo><span>World</span></NameCell>
          <Flag tabIndex={-1} /><Flag tabIndex={-1} /><Flag tabIndex={-1} />
        </Row>
        {OBJECTS.map((o, i) => (
          <Row key={o} $i={i + 3}>
            <NameCell $white={i === 2}>
              <Branch w={41} cx={28} stem />
              <Halo $c={i === 2 ? "#b08a55" : undefined}><Icon name="mesh" /></Halo>
              <span>{o}</span><Sep /><Icon name="meshGrey" soft />
            </NameCell>
            <Flag aria-label={`${o} visible`}><Icon name={i < 3 ? "eye" : "eyeShut"} /></Flag>
            <Flag aria-label={`${o} selectable`}><Icon name="arrow" faded={i > 2} /></Flag>
            <Flag aria-label={`${o} renderable`}><Icon name="camera" size={14} faded={i > 2} /></Flag>
          </Row>
        ))}
      </ul>
      <OutScroll><Track $dir="v"><Thumb $dir="v" $before={-1} $size="34px" /></Track></OutScroll>
    </OutMain>
    <HScroll><Track $dir="h"><Thumb $dir="h" $before={-1} $size="132px" /></Track></HScroll>
    <Hatch place="tr" />
    <Hatch place="bl" />
  </OutBox>
);
const Tabs = styled.div`
  display: flex;
  flex: none;
  height: 20px;
  margin-left: 3px;
  border: 1px solid #222;
  border-right: 0;
  border-radius: 5px 0 0 5px;
  overflow: hidden;
  background: #444;
`;
const Tab = styled.button<{ $on?: boolean }>`
  width: 20px;
  flex: none;
  display: flex;
  align-items: center;
  justify-content: center;
  border-right: 1px solid #222;
  background: ${(p) => (p.$on ? "#5680c8" : "#474747")};
`;
const TABS = ["camera", "layers", "scene", "world", "cube", "link", "wrench", "meshGrey", "material"];
const Props = styled.section`
  position: relative;
  flex: 1;
  min-height: 0;
  overflow: hidden;
  display: flex;
  flex-direction: column;
`;
const Crumb = styled.div`
  display: flex;
  align-items: center;
  height: 42px;
  padding-left: 10px;
  span { padding: 2px 0 0 4px; }
`;
const Content = styled.div`
  display: flex;
  flex-direction: column;
  gap: 5px;
  padding: 4px 8px 0;
`;
const Card = styled.div`
  height: 124px;
  border: 1px solid ${line};
  border-radius: 4px;
  background: #7f7f7f;
`;
const CardHead = styled.div`
  display: flex;
  align-items: center;
  height: 33px;
  padding: 2px 4px 0 2px;
  border-bottom: 1px solid ${line};
`;
const CardBody = styled.div`
  display: grid;
  grid-template-columns: 1fr 1fr;
  column-gap: 8px;
  padding: 8px 4px;
`;
const IconBtn = styled.button`
  display: flex;
  align-items: center;
  justify-content: center;
  width: 16px;
  height: 20px;
`;
const Modifier = ({ name, op, obj }: { name: string; op: string; obj: string }) => (
  <Card>
    <CardHead>
      <IconBtn aria-label="Collapse"><Icon name="triDown" size={13} /></IconBtn>
      <Spacer $w={11} />
      <Icon name="boolean" size={15} />
      <Spacer $w={3} />
      <Group $w="26px"><TextCell $pad={7}><input aria-label="Modifier name" defaultValue={name} /></TextCell></Group>
      <Spacer $w={7} />
      <Group $w="34px" $cols="1fr 1fr">
        <CellBtn $fill="#565656" aria-label="Use in render"><Icon name="camera" /></CellBtn>
        <CellBtn $fill="#565656" aria-label="Show in viewport"><Icon name="eye" size={15} /></CellBtn>
      </Group>
      <Spacer $w={27} />
      <Group $w="34px" $cols="1fr 1fr">
        <CellBtn aria-label="Move up"><Icon name="triUp" size={14} /></CellBtn>
        <CellBtn aria-label="Move down"><Icon name="triDown" size={14} /></CellBtn>
      </Group>
      <Spacer $w={8} />
      <IconBtn aria-label="Remove modifier"><Icon name="cross" size={15} /></IconBtn>
    </CardHead>
    <CardBody>
      <Group><ToolBtn $align="center">Apply</ToolBtn></Group>
      <Group><ToolBtn $align="center">Copy</ToolBtn></Group>
      <Label $mt={8}>Operation:</Label>
      <Label $mt={8}>Object:</Label>
      <Menu value={op} label="Operation" $mt={1} />
      <Group $mt={1}>
        <TextCell><Icon name="cube" /><input aria-label="Object" defaultValue={obj} /><Icon name="cross" size={14} /></TextCell>
      </Group>
    </CardBody>
  </Card>
);

const Stats = styled.div`
  display: flex;
  align-items: center;
  gap: 10px;
  margin-left: 12px;
  span { padding-top: 3px; }
`;
const IdBlock = ({ icon, value, label }: { icon: string; value: string; label: string }) => (
  <Group $w="192px" $cols="31px 1fr 19px 19px">
    <DarkCell aria-label={`Choose ${label}`}><Icon name={icon} size={15} /><UpDown /></DarkCell>
    <TextCell $pad={5}><input aria-label={label} defaultValue={value} /></TextCell>
    <CellBtn aria-label={`Add ${label}`}><Icon name="plus" size={15} /></CellBtn>
    <CellBtn aria-label={`Delete ${label}`}><Icon name="cross" size={15} /></CellBtn>
  </Group>
);

export default function App() {
  return (
    <>
      <Global />
      <Frame>
        <TitleBar>
          <Title><Icon name="logo" size={15} /><span>Blender* [E:\brokenpixel\media_src\blendermaps\base.blend]</span></Title>
          <WinBtns>
            <button aria-label="Minimize"><svg width="8" height="8"><path d="M1 5.500h6" stroke="#fff" strokeWidth="2" /></svg></button>
            <button aria-label="Maximize"><svg width="8" height="8"><path d="M1.500 1.500h5v5h-5z" fill="none" stroke="#fff" strokeWidth="1.500" /></svg></button>
            <button aria-label="Close"><svg width="8" height="8"><path d="m1 1 6 6M7 1 1 7" stroke="#fff" strokeWidth="2" /></svg></button>
          </WinBtns>
        </TitleBar>
        <Body>
          <Bar $h={27} $top={3} $bg="linear-gradient(#6e6e6e, #666)">
            <Hatch place="bl" />
            <Editor icon="info" label="Info editor" />
            <Menus items={["File", "Add", "Render", "Window", "Help"]} lead={9} />
            <IdBlock icon="screens" value="Default" label="screen" />
            <IdBlock icon="scene" value="Scene" label="scene" />
            <Spacer $w={6} />
            <Menu value="Blender Render" label="Render engine" $w="111px" />
            <Stats>
              <Icon name="logo" />
              <span>v2.68 | Verts:470 | Faces:410 | Tris:750 | Objects:1/47 | Lamps:0/0 | Mem:19.01M (2.12M) | Cube.003</span>
            </Stats>
            <Hatch place="tr" />
          </Bar>
          <Columns>
            <LeftCol>
              <View3D>
                <Shelf>
                  <ShelfTop>
                    <ShelfCol>
                      <Label>Shading:</Label>
                      <Group $cols="61px 1fr"><ToolBtn>Smooth</ToolBtn><ToolBtn>Flat</ToolBtn></Group>
                      <Label $mt={5}>Keyframes:</Label>
                      <Group $cols="61px 1fr"><ToolBtn>Insert</ToolBtn><ToolBtn>Remove</ToolBtn></Group>
                      <Label $mt={5}>Motion Paths:</Label>
                      <Group $cols="61px 1fr"><ToolBtn>Calculate</ToolBtn><ToolBtn>Clear</ToolBtn></Group>
                      <Label $mt={5}>Repeat:</Label>
                      <Group $rows={2}><ToolBtn>Repeat Last</ToolBtn><ToolBtn>History...</ToolBtn></Group>
                      <Label $mt={5}>Grease Pencil:</Label>
                      <Group $rows={2} $cols="61px 1fr">
                        <ToolBtn>Draw</ToolBtn><ToolBtn>Line</ToolBtn><ToolBtn>Poly</ToolBtn><ToolBtn>Erase</ToolBtn>
                      </Group>
                      <CheckLabel><Tick />Use Sketching Sessi</CheckLabel>
                      <Group><ToolBtn>Ruler/Protractor</ToolBtn></Group>
                      <PanelTitle text="Rigid Body Tools" $line $mt={12} />
                    </ShelfCol>
                    <ShelfScroll>
                      <Track $dir="v"><Thumb $dir="v" $before={169} $size="calc(100% - 169px)" /></Track>
                    </ShelfScroll>
                  </ShelfTop>
                  <Operator>
                    <PanelTitle text="(De)select All" open />
                    <Label $mt={6}>Action</Label>
                    <Menu value="Toggle" label="Action" />
                  </Operator>
                </Shelf>
                <Quad>
                  <TopView />
                  <PerspView />
                  <FrontView />
                  <RightView />
                </Quad>
                <NPanel />
              </View3D>
              <Bar>
                <Hatch place="bl" />
                <Editor icon="cubeGrey" label="3D view editor" />
                <Menus items={["View", "Select", "Object"]} gap={18} lead={12} end={2} />
                <Menu value="Object Mode" label="Mode" icon="cube" $w="108px" />
                <Editor icon="wire" label="Viewport shading" w={35} />
                <Group $w="55px" $cols="1fr 19px">
                  <DarkCell aria-label="Pivot"><Icon name="pivot" /><UpDown /></DarkCell>
                  <CellBtn aria-label="Manipulate centers" $fill="#a6a6a6"><Icon name="align" /></CellBtn>
                </Group>
                <Group $w="153px" $cols="19px 19px 19px 19px 1fr">
                  <CellBtn aria-label="Manipulator" $fill="#6a6a6a"><Icon name="axes" /></CellBtn>
                  <CellBtn aria-label="Translate" $fill="#5680c8"><Icon name="move" /></CellBtn>
                  <CellBtn aria-label="Rotate" $fill="#4a4a4a"><Icon name="rotate" size={15} /></CellBtn>
                  <CellBtn aria-label="Scale" $fill="#4a4a4a"><Icon name="scale" size={15} /></CellBtn>
                  <Menu value="Global" label="Orientation" $bare />
                </Group>
                <Layers on from={1} />
                <Layers from={11} />
                <Group $w="20px"><CellBtn aria-label="Lock layers"><Icon name="lockView" /></CellBtn></Group>
                <Group $w="20px"><CellBtn aria-label="Proportional editing"><Icon name="disc" /></CellBtn></Group>
                <Group $w="55px" $cols="19px 1fr">
                  <CellBtn aria-label="Snap" $fill="#6a6a6a"><Icon name="magnet" /></CellBtn>
                  <DarkCell aria-label="Snap element"><Icon name="snap" /><UpDown /></DarkCell>
                </Group>
                <Group $w="40px" $cols="1fr 1fr">
                  <CellBtn aria-label="Render view"><Icon name="cameraStar" /></CellBtn>
                  <CellBtn aria-label="Render animation"><Icon name="clap" /></CellBtn>
                </Group>
              </Bar>
              <TimeArea />
            </LeftCol>
            <RightCol>
              <Outliner />
              <Props>
                <Bar $h={24} $pad={9}>
                  <Editor icon="props" label="Properties editor" w={29} />
                  <Tabs>
                    {TABS.map((t) => (
                      <Tab key={t} $on={t === "wrench"} aria-label={`${t} tab`}><Icon name={t} soft={t !== "wrench"} /></Tab>
                    ))}
                  </Tabs>
                </Bar>
                <Crumb>
                  <Icon name="pin" />
                  <Spacer $w={6} />
                  <Icon name="scene" />
                  <Spacer $w={6} />
                  <svg width="5" height="8" aria-hidden="true"><path d="M0 0v8l5-4z" fill="#3a3a3a" /></svg>
                  <Spacer $w={14} />
                  <Icon name="cube" />
                  <span>Cube.003</span>
                </Crumb>
                <Content>
                  <Menu value="Add Modifier" label="Add modifier" />
                  <Modifier name="an" op="Union" obj="ube.004" />
                  <Modifier name="01" op="Difference" obj="ube.005" />
                  <Modifier name="02" op="Difference" obj="ube.007" />
                </Content>
                <Hatch place="tr" />
                <Hatch place="bl" />
              </Props>
            </RightCol>
          </Columns>
        </Body>
      </Frame>
    </>
  );
}
